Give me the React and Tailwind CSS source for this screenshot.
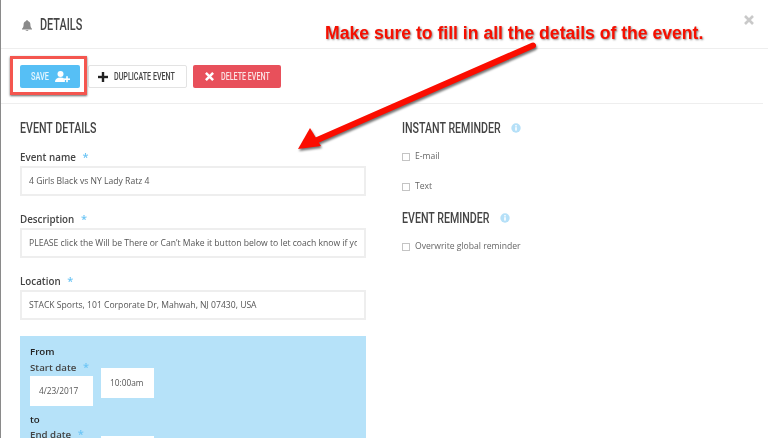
import React from "react";

const sans = "font-['Open_Sans','Noto_Sans',sans-serif]";
const cond = "font-['Roboto',sans-serif] font-medium block origin-left whitespace-nowrap";

function Star() {
  return <span className="ml-[4px] text-[#6cc5f5] text-[11px]">*</span>;
}

function Field({ label, value, className = "" }) {
  return (
    <div className={className}>
      <div className="h-[16px] leading-[16px] text-[9.800px] font-semibold text-[#444]">
        {label} <Star />
      </div>
      <div className="mt-[1px] h-[30px] border-2 border-[#eeeeee] bg-white px-[7px] flex items-center overflow-hidden">
        <span className="text-[8.600px] text-[#555] whitespace-nowrap overflow-hidden block w-full">{value}</span>
      </div>
    </div>
  );
}

function Info({ className = "" }) {
  return (
    <svg width="10" height="10" viewBox="0 0 10 10" className={`absolute ${className}`}>
      <circle cx="5" cy="5" r="4.7" fill="#b5e0f8" />
      <rect x="4.2" y="4.2" width="1.6" height="3.4" fill="#fff" />
      <rect x="4.2" y="2.1" width="1.6" height="1.4" fill="#fff" />
    </svg>
  );
}

function Check({ label, className = "" }) {
  return (
    <div className={`flex items-center h-[12px] ${className}`}>
      <span className="w-[8px] h-[8px] border border-[#c4c4c4] bg-white mt-[1px]" />
      <span className="ml-[5px] text-[8.600px] text-[#666] leading-[12px] whitespace-nowrap">{label}</span>
    </div>
  );
}

export default function App() {
  return (
    <div className={`relative w-[768px] h-[443px] overflow-hidden bg-white ${sans} blur-[0.35px]`}>
      <div className="h-[438px] overflow-hidden border-l border-[#8a8a8a]">
        <header className="h-[49px] border-b border-[#eeeeee] flex items-center pl-[20px] pt-[2px]">
          <svg width="12" height="13" viewBox="0 0 24 24" fill="#8a8a8a">
            <path d="M12 1c-1 0-1.6.7-1.6 1.6v.5C7 4 5.2 6.8 5.2 10c0 4.4-1 6.4-3.2 8.400V20h20v-1.600C19.800 16.400 18.800 14.400 18.800 10c0-3.200-1.800-6-5.200-6.900v-.5C13.600 1.700 13 1 12 1zM9 21.200c.3 1 1.500 1.800 3 1.800s2.700-.8 3-1.800H9z" />
          </svg>
          <span className={`ml-[7px] text-[16px] text-[#444] scale-x-[0.68] ${cond}`}>DETAILS</span>
        </header>

        <div className="h-[55px] border-b border-[#eeeeee] mr-[5px] flex items-center pl-[19px] pt-[1px]">
          <button className="w-[60px] h-[23px] rounded-[2px] bg-[#56bff5] flex items-center pl-[11px]">
            <span className={`w-[18px] text-[10.500px] text-[#e6f6ff] scale-x-[0.7] ${cond}`}>SAVE</span>
            <svg width="15" height="12" viewBox="0 0 15 12" fill="#fff" className="ml-[6px] shrink-0">
              <circle cx="5.500" cy="3" r="3" />
              <path d="M0 11c0-3 2-4.500 5.500-4.500 1.400 0 2.500.2 3.400.7V9h1v2H0z" />
              <rect x="9" y="7.400" width="6" height="1.600" />
              <rect x="11.200" y="5.200" width="1.600" height="6" />
            </svg>
          </button>
          <button className="ml-[8px] w-[99px] h-[23px] rounded-[2px] border border-[#e3e3e3] bg-white flex items-center pl-[9px]">
            <svg width="10" height="10" viewBox="0 0 10 10" fill="#222" className="shrink-0">
              <rect x="3.800" y="0" width="2.400" height="10" />
              <rect x="0" y="3.800" width="10" height="2.400" />
            </svg>
            <span className={`ml-[6px] w-[62px] text-left text-[10.500px] text-[#444] scale-x-[0.68] ${cond}`}>DUPLICATE EVENT</span>
          </button>
          <button className="ml-[6px] w-[88px] h-[23px] rounded-[2px] bg-[#e8505b] flex items-center pl-[12px]">
            <svg width="9" height="9" viewBox="0 0 10 10" stroke="#fff" strokeWidth="2.800" className="shrink-0">
              <path d="M1 1l8 8M9 1l-8 8" />
            </svg>
            <span className={`ml-[7px] w-[48px] text-left text-[10.500px] text-[#fbe3e4] scale-x-[0.68] ${cond}`}>DELETE EVENT</span>
          </button>
        </div>

        <div className="flex pl-[19px] pt-[16px]">
          <div className="w-[346px]">
            <h2 className={`h-[16px] leading-[16px] text-[15px] text-[#444] scale-x-[0.71] ${cond}`}>EVENT DETAILS</h2>
            <Field className="mt-[13px]" label="Event name" value="4 Girls Black vs NY Lady Ratz 4" />
            <Field className="mt-[15px]" label="Description" value="PLEASE click the Will be There or Can’t Make it button below to let coach know if you" />
            <Field className="mt-[15px]" label="Location" value="STACK Sports, 101 Corporate Dr, Mahwah, NJ 07430, USA" />
            <div className="mt-[16px] h-[140px] bg-[#b6e2f9] pl-[10px] pt-[9px] text-[9.700px] font-semibold">
              <div className="h-[14px] leading-[14px] text-[#222]">From</div>
              <div className="h-[14px] leading-[14px] text-[#444] mt-[1px]">Start date <Star /></div>
              <div className="flex items-start">
                <div className="mt-[2px] w-[63px] h-[30px] bg-white flex items-center pl-[9px] text-[8.300px] font-normal text-[#555]">4/23/2017</div>
                <div className="ml-[8px] mt-[-6px] w-[53px] h-[30px] bg-white flex items-center pl-[9px] text-[8.300px] font-normal text-[#555]">10:00am</div>
              </div>
              <div className="mt-[7px] h-[14px] leading-[14px] text-[#222]">to</div>
              <div className="h-[14px] leading-[14px] text-[#444]">End date <Star /></div>
              <div className="ml-[71px] mt-[-5px] w-[53px] h-[30px] bg-white" />
            </div>
          </div>

          <div className="ml-[36px] w-[300px]">
            <div className="relative h-[16px]">
              <h2 className={`leading-[16px] text-[15px] text-[#444] scale-x-[0.71] ${cond}`}>INSTANT REMINDER</h2>
              <Info className="left-[109px] top-[3px]" />
            </div>
            <Check className="mt-[14px]" label="E-mail" />
            <Check className="mt-[18px]" label="Text" />
            <div className="relative h-[16px] mt-[18px]">
              <h2 className={`leading-[16px] text-[15px] text-[#444] scale-x-[0.71] ${cond}`}>EVENT REMINDER</h2>
              <Info className="left-[98px] top-[3px]" />
            </div>
            <Check className="mt-[14px]" label="Overwrite global reminder" />
          </div>
        </div>
      </div>

      {/* close */}
      <svg width="10" height="10" viewBox="0 0 10 10" stroke="#c9c9c9" strokeWidth="2.600" className="absolute left-[744px] top-[15px]">
        <path d="M1 1l8 8M9 1l-8 8" />
      </svg>

      {/* annotation: highlight around save */}
      <div className="absolute left-[10px] top-[56px] w-[77px] h-[39px] border-[3px] border-[#f4564f] shadow-[0_1px_2px_rgba(0,0,0,0.6)]" />

      {/* annotation: arrow */}
      <svg width="768" height="443" className="absolute left-0 top-0 pointer-events-none">
        <g style={{ filter: "drop-shadow(1px 2px 1px rgba(0,0,0,0.55))" }}>
          <path d="M533 45.500L315 141" stroke="#fb0d00" strokeWidth="6" strokeLinecap="round" fill="none" />
          <path d="M298 149L310 128L321 146Z" fill="#fb0d00" />
        </g>
      </svg>

      {/* annotation: caption */}
      <div className="absolute left-[325px] top-[24px] text-[17.600px] leading-[18px] font-bold text-[#f60f00] whitespace-nowrap font-['Liberation_Sans',sans-serif] [text-shadow:1px_1px_2px_rgba(0,0,0,0.45)]">
        Make sure to fill in all the details of the event.
      </div>
    </div>
  );
}
